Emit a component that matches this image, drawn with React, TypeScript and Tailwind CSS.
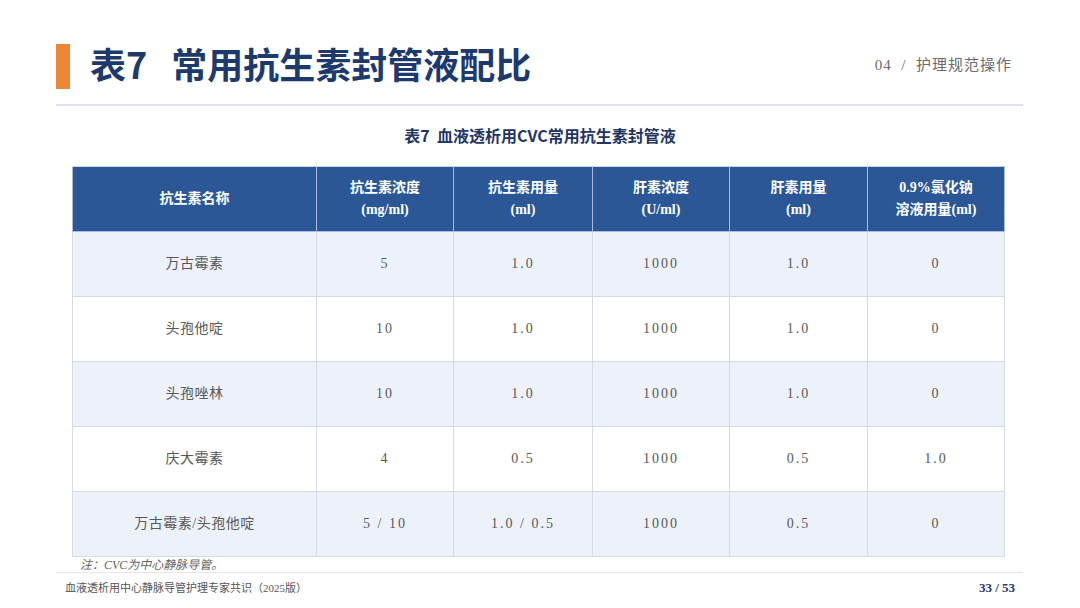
import React from "react";

const headers: React.ReactNode[] = [
  "抗生素名称",
  <>抗生素浓度<br />(mg/ml)</>,
  <>抗生素用量<br />(ml)</>,
  <>肝素浓度<br />(U/ml)</>,
  <>肝素用量<br />(ml)</>,
  <>0.9%氯化钠<br />溶液用量(ml)</>,
];

const rows: string[][] = [
  ["万古霉素", "5", "1.0", "1000", "1.0", "0"],
  ["头孢他啶", "10", "1.0", "1000", "1.0", "0"],
  ["头孢唑林", "10", "1.0", "1000", "1.0", "0"],
  ["庆大霉素", "4", "0.5", "1000", "0.5", "1.0"],
  ["万古霉素/头孢他啶", "5 / 10", "1.0 / 0.5", "1000", "0.5", "0"],
];

export default function App() {
  return (
    <div
      className="w-[1080px] h-[608px] bg-white flex flex-col overflow-hidden"
      style={{ fontFamily: '"Liberation Serif", "Noto Sans CJK SC", serif' }}
    >
      {/* Header */}
      <div className="mt-[44px] mx-[56px] w-[967px] flex items-center justify-between">
        <div className="flex items-center h-[45px]">
          <div className="w-[14px] h-[45px] bg-[#ee8733]" />
          <div
            className="ml-[20px] mb-[6px] flex items-center text-[36px] leading-[45px] font-bold text-[#1e3a6c]"
            style={{ fontFamily: '"Noto Sans CJK SC", sans-serif' }}
          >
            <span>表7</span>
            <span className="ml-[24px]">常用抗生素封管液配比</span>
          </div>
        </div>
        <div className="mr-[11px] mb-[4px] text-[15px] leading-[20px] text-[#6b6b6b] tracking-[1px]">
          04&nbsp;&nbsp;/&nbsp;&nbsp;护理规范操作
        </div>
      </div>
      <div className="mt-[15px] ml-[56px] w-[967px] h-[2px] bg-[#e2e2f2]" />

      {/* Subtitle */}
      <div
        className="mt-[19px] h-[20px] leading-[20px] text-center text-[16px] font-bold text-[#1f3565]"
        style={{ fontFamily: '"Noto Sans CJK SC", sans-serif' }}
      >
        表7&nbsp;&nbsp;血液透析用CVC常用抗生素封管液
      </div>

      {/* Table */}
      <table className="mt-[21px] ml-[72px] w-[932px] table-fixed border-collapse">
        <colgroup>
          <col className="w-[244px]" />
          <col className="w-[137px]" />
          <col className="w-[139px]" />
          <col className="w-[137px]" />
          <col className="w-[138px]" />
          <col className="w-[137px]" />
        </colgroup>
        <thead>
          <tr className="h-[65px]">
            {headers.map((h, i) => (
              <th
                key={i}
                className="bg-[#2b5797] text-white text-[14px] leading-[22px] font-bold text-center align-middle border border-[#a9bbdb] border-t-[#d0d6e0] p-0"
                style={{ fontFamily: '"Liberation Serif", "Noto Sans CJK SC", serif' }}
              >
                {h}
              </th>
            ))}
          </tr>
        </thead>
        <tbody>
          {rows.map((r, ri) => (
            <tr
              key={ri}
              className={"h-[65px] " + (ri % 2 === 0 ? "bg-[#edf2fa]" : "bg-white")}
            >
              {r.map((c, ci) => (
                <td
                  key={ci}
                  className={
                    "text-center align-middle text-[14px] leading-[20px] text-[#595959] border border-[#d6dae2] p-0 " +
                    (ci === 0 ? "tracking-[0.5px]" : "tracking-[2px]")
                  }
                >
                  {c}
                </td>
              ))}
            </tr>
          ))}
        </tbody>
      </table>

      {/* Note */}
      <div className="mt-[2px] ml-[80px] h-[13px] leading-[13px] text-[12px] italic text-[#666]">
        注：CVC为中心静脉导管。
      </div>
      <div className="ml-[56px] w-[967px] h-[1px] bg-[#e6e6e6]" />

      {/* Footer */}
      <div className="mt-[8px] ml-[65px] w-[950px] flex items-center justify-between h-[14px]">
        <span className="text-[11px] leading-[14px] text-[#555]">
          血液透析用中心静脉导管护理专家共识（2025版）
        </span>
        <span className="text-[13px] leading-[14px] font-bold text-[#1f3a6c]">33 / 53</span>
      </div>
    </div>
  );
}
